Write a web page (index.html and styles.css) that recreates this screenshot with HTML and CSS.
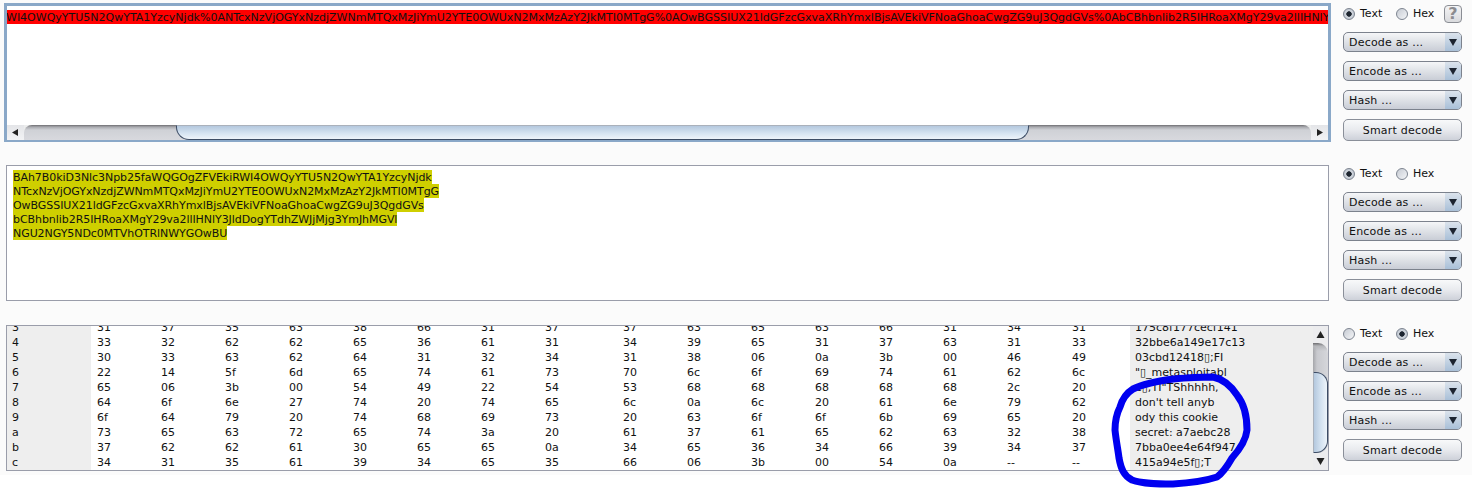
FILE: index.html
```html
<!DOCTYPE html>
<html lang="en">
<head>
<meta charset="utf-8">
<title>Decoder</title>
<link rel="stylesheet" href="styles.css">
</head>
<body>
<main class="app">
  <section class="row">
    <div class="editor editor-focus">
      <div class="line-view">
        <div class="red-line">WI4OWQyYTU5N2QwYTA1YzcyNjdk%0ANTcxNzVjOGYxNzdjZWNmMTQxMzJiYmU2YTE0OWUxN2MxMzAzY2JkMTI0MTgG%0AOwBGSSIUX21ldGFzcGxvaXRhYmxlBjsAVEkiVFNoaGhoaCwgZG9uJ3QgdGVs%0AbCBhbnlib2R5IHRoaXMgY29va2llIHNlY3JldDogYTdhZWJjMjg3YmJhMGVl%0ANGU2NGY5NDc0MTVhOTRlNWYGOwBU</div>
      </div>
      <div class="hscroll">
        <span class="arrow-btn"><svg width="9" height="9" viewBox="0 0 9 9"><path d="M7 1v7L1 4.500z" fill="#222"/></svg></span>
        <div class="htrack">
          <div class="hspace-left"></div>
          <div class="hthumb"></div>
          <div class="hspace-right"></div>
        </div>
        <span class="arrow-btn"><svg width="9" height="9" viewBox="0 0 9 9"><path d="M2 1v7l6-3.500z" fill="#222"/></svg></span>
      </div>
    </div>
    <aside class="side">
      <div class="radios">
        <span class="radio radio-on"></span><span class="radio-label label-text">Text</span>
        <span class="radio"></span><span class="radio-label">Hex</span>
        <span class="help">?</span>
      </div>
      <div class="combo"><span class="combo-text">Decode as ...</span><span class="combo-arrow"><svg width="8" height="8" viewBox="0 0 8 8"><path d="M0 1h8L4 8z" fill="#1c2430"/></svg></span></div>
      <div class="combo"><span class="combo-text">Encode as ...</span><span class="combo-arrow"><svg width="8" height="8" viewBox="0 0 8 8"><path d="M0 1h8L4 8z" fill="#1c2430"/></svg></span></div>
      <div class="combo"><span class="combo-text">Hash ...</span><span class="combo-arrow"><svg width="8" height="8" viewBox="0 0 8 8"><path d="M0 1h8L4 8z" fill="#1c2430"/></svg></span></div>
      <div class="smart">Smart decode</div>
    </aside>
  </section>

  <section class="row">
    <div class="editor editor-text">
      <div class="yellow-block">
        <span class="yellow-line">BAh7B0kiD3Nlc3Npb25faWQGOgZFVEkiRWI4OWQyYTU5N2QwYTA1YzcyNjdk</span>
        <span class="yellow-line">NTcxNzVjOGYxNzdjZWNmMTQxMzJiYmU2YTE0OWUxN2MxMzAzY2JkMTI0MTgG</span>
        <span class="yellow-line">OwBGSSIUX21ldGFzcGxvaXRhYmxlBjsAVEkiVFNoaGhoaCwgZG9uJ3QgdGVs</span>
        <span class="yellow-line">bCBhbnlib2R5IHRoaXMgY29va2llIHNlY3JldDogYTdhZWJjMjg3YmJhMGVl</span>
        <span class="yellow-line">NGU2NGY5NDc0MTVhOTRlNWYGOwBU</span>
      </div>
    </div>
    <aside class="side">
      <div class="radios">
        <span class="radio radio-on"></span><span class="radio-label label-text">Text</span>
        <span class="radio"></span><span class="radio-label">Hex</span>
      </div>
      <div class="combo"><span class="combo-text">Decode as ...</span><span class="combo-arrow"><svg width="8" height="8" viewBox="0 0 8 8"><path d="M0 1h8L4 8z" fill="#1c2430"/></svg></span></div>
      <div class="combo"><span class="combo-text">Encode as ...</span><span class="combo-arrow"><svg width="8" height="8" viewBox="0 0 8 8"><path d="M0 1h8L4 8z" fill="#1c2430"/></svg></span></div>
      <div class="combo"><span class="combo-text">Hash ...</span><span class="combo-arrow"><svg width="8" height="8" viewBox="0 0 8 8"><path d="M0 1h8L4 8z" fill="#1c2430"/></svg></span></div>
      <div class="smart">Smart decode</div>
    </aside>
  </section>

  <section class="row">
    <div class="editor editor-hex">
      <div class="hex-view">
        <div class="hex-table">
          <div class="hex-row"><span>3</span><span>31</span><span>37</span><span>35</span><span>63</span><span>38</span><span>66</span><span>31</span><span>37</span><span>37</span><span>63</span><span>65</span><span>63</span><span>66</span><span>31</span><span>34</span><span>31</span><span>175c8f177cecf141</span></div>
          <div class="hex-row"><span>4</span><span>33</span><span>32</span><span>62</span><span>62</span><span>65</span><span>36</span><span>61</span><span>31</span><span>34</span><span>39</span><span>65</span><span>31</span><span>37</span><span>63</span><span>31</span><span>33</span><span>32bbe6a149e17c13</span></div>
          <div class="hex-row"><span>5</span><span>30</span><span>33</span><span>63</span><span>62</span><span>64</span><span>31</span><span>32</span><span>34</span><span>31</span><span>38</span><span>06</span><span>0a</span><span>3b</span><span>00</span><span>46</span><span>49</span><span>03cbd12418▯;FI</span></div>
          <div class="hex-row"><span>6</span><span>22</span><span>14</span><span>5f</span><span>6d</span><span>65</span><span>74</span><span>61</span><span>73</span><span>70</span><span>6c</span><span>6f</span><span>69</span><span>74</span><span>61</span><span>62</span><span>6c</span><span>"▯_metasploitabl</span></div>
          <div class="hex-row"><span>7</span><span>65</span><span>06</span><span>3b</span><span>00</span><span>54</span><span>49</span><span>22</span><span>54</span><span>53</span><span>68</span><span>68</span><span>68</span><span>68</span><span>68</span><span>2c</span><span>20</span><span>e▯;TI"TShhhhh, </span></div>
          <div class="hex-row"><span>8</span><span>64</span><span>6f</span><span>6e</span><span>27</span><span>74</span><span>20</span><span>74</span><span>65</span><span>6c</span><span>0a</span><span>6c</span><span>20</span><span>61</span><span>6e</span><span>79</span><span>62</span><span>don't tell anyb</span></div>
          <div class="hex-row"><span>9</span><span>6f</span><span>64</span><span>79</span><span>20</span><span>74</span><span>68</span><span>69</span><span>73</span><span>20</span><span>63</span><span>6f</span><span>6f</span><span>6b</span><span>69</span><span>65</span><span>20</span><span>ody this cookie</span></div>
          <div class="hex-row"><span>a</span><span>73</span><span>65</span><span>63</span><span>72</span><span>65</span><span>74</span><span>3a</span><span>20</span><span>61</span><span>37</span><span>61</span><span>65</span><span>62</span><span>63</span><span>32</span><span>38</span><span>secret: a7aebc28</span></div>
          <div class="hex-row"><span>b</span><span>37</span><span>62</span><span>62</span><span>61</span><span>30</span><span>65</span><span>65</span><span>0a</span><span>34</span><span>65</span><span>36</span><span>34</span><span>66</span><span>39</span><span>34</span><span>37</span><span>7bba0ee4e64f947</span></div>
          <div class="hex-row"><span>c</span><span>34</span><span>31</span><span>35</span><span>61</span><span>39</span><span>34</span><span>65</span><span>35</span><span>66</span><span>06</span><span>3b</span><span>00</span><span>54</span><span>0a</span><span>--</span><span>--</span><span>415a94e5f▯;T</span></div>
        </div>
      </div>
      <div class="vscroll">
        <span class="varrow"><svg width="9" height="9" viewBox="0 0 9 9"><path d="M4.500 1l4 7h-8z" fill="#222"/></svg></span>
        <div class="vtrack">
          <div class="vspace-top"></div>
          <div class="vthumb"></div>
          <div class="vspace-bottom"></div>
        </div>
        <span class="varrow"><svg width="9" height="9" viewBox="0 0 9 9"><path d="M.5 1h8l-4 7z" fill="#222"/></svg></span>
      </div>
    </div>
    <aside class="side">
      <div class="radios">
        <span class="radio"></span><span class="radio-label label-text">Text</span>
        <span class="radio radio-on"></span><span class="radio-label">Hex</span>
      </div>
      <div class="combo"><span class="combo-text">Decode as ...</span><span class="combo-arrow"><svg width="8" height="8" viewBox="0 0 8 8"><path d="M0 1h8L4 8z" fill="#1c2430"/></svg></span></div>
      <div class="combo"><span class="combo-text">Encode as ...</span><span class="combo-arrow"><svg width="8" height="8" viewBox="0 0 8 8"><path d="M0 1h8L4 8z" fill="#1c2430"/></svg></span></div>
      <div class="combo"><span class="combo-text">Hash ...</span><span class="combo-arrow"><svg width="8" height="8" viewBox="0 0 8 8"><path d="M0 1h8L4 8z" fill="#1c2430"/></svg></span></div>
      <div class="smart">Smart decode</div>
    </aside>
  </section>

  <svg class="scribble" width="150" height="120" viewBox="1110 372 150 120">
    <path d="M1213 377C1198 377 1184 378 1173 379C1158 381 1143 384 1133 389C1125 394 1122 400 1120 407C1116 415 1115 422 1115 430C1116 440 1118 450 1119 458C1121 469 1124 476 1132 480C1143 484 1158 484 1173 484C1190 483 1205 481 1217 477C1224 472 1228 465 1232 458C1240 449 1246 440 1247 430C1247 418 1245 405 1237 395C1231 386 1223 379 1213 377Z" fill="none" stroke="#0000f0" stroke-width="7" stroke-linejoin="round"/>
  </svg>
</main>
</body>
</html>
```
FILE: styles.css
```css
* { box-sizing: border-box; }
html, body { margin: 0; padding: 0; height: 100%; }
body {
  background: #fff;
  font-family: "DejaVu Sans", sans-serif;
  font-size: 11px;
  color: #111;
  overflow: hidden;
}
.app {
  position: relative;
  height: 475px;
  background: #fbfbfb;
}
.row {
  display: flex;
  height: 160px;
  align-items: flex-start;
}
.row:last-of-type { height: 155px; }
.editor {
  flex: none;
  background: #fff;
  overflow: hidden;
}
.editor-focus {
  display: flex;
  flex-direction: column;
  margin: 3px 0 0 4px;
  width: 1327px;
  height: 139px;
  border: 3px solid #8aa8c8;
  border-bottom-width: 2px;
}
.line-view { flex: 1; padding-top: 4px; overflow: hidden; }
.red-line {
  height: 14px;
  padding-top: 1px;
  line-height: 14px;
  background: #ff0000;
  white-space: nowrap;
  overflow: hidden;
  text-indent: -1px;
}
.hscroll {
  flex: none;
  display: flex;
  height: 15px;
  background: #eceded;
}
.arrow-btn {
  flex: none;
  display: flex;
  align-items: center;
  justify-content: center;
  width: 17px;
  background: linear-gradient(#e4e5e8, #f2f3f5);
}
.htrack {
  flex: 1;
  display: flex;
  border-radius: 8px 8px 0 0;
  background: linear-gradient(#6d6d70 0, #a9aaaf 2px, #cfd1d6 5px, #d8d9de 100%);
}
.hspace-left { flex: none; width: 152px; }
.hthumb {
  flex: none;
  width: 853px;
  border: 1px solid #3d4d66;
  border-top-color: #aab1bb;
  border-radius: 0 0 13px 13px;
  background: linear-gradient(#b4c8de, #d5e3f1 55%, #eef4fa);
}
.hspace-right { flex: 1; }

.editor-text {
  margin: 5px 0 0 6px;
  width: 1323px;
  height: 136px;
  border: 1px solid #9a9daa;
  padding: 4px 0 0 6px;
}
.yellow-block { display: flex; flex-direction: column; align-items: flex-start; }
.yellow-line {
  height: 14px;
  padding-top: 1px;
  line-height: 14px;
  letter-spacing: -0.06px;
  background: #cfcf00;
  white-space: nowrap;
}

.editor-hex {
  display: flex;
  margin: 5px 0 0 6px;
  width: 1323px;
  height: 146px;
  border: 1px solid #9a9daa;
}
.hex-view {
  flex: 1;
  overflow: hidden;
  background: linear-gradient(90deg, #eeeeee 84px, #fff 84px, #fff 1123px, #eeeeee 1123px);
}
.hex-table { margin-top: -6px; }
.hex-row {
  display: grid;
  grid-template-columns: 84px repeat(7, 64px) 78px repeat(6, 64px) 65px 64px 1fr;
  height: 15px;
  line-height: 15px;
  white-space: pre;
}
.hex-row span { padding-left: 6px; }
.hex-row span:first-child,
.hex-row span:last-child { padding-left: 5px; }
.vscroll {
  flex: none;
  display: flex;
  flex-direction: column;
  width: 15px;
  background: #ececee;
}
.varrow {
  flex: none;
  display: flex;
  align-items: center;
  justify-content: center;
  height: 17px;
  background: #ececee;
}
.vtrack {
  flex: 1;
  display: flex;
  flex-direction: column;
  border-radius: 0 10px 10px 0;
  background:
    linear-gradient(#6d6d70, #b5b6ba 3px, transparent 8px),
    linear-gradient(90deg, #a5a6aa 0, #c8c9ce 4px, #d6d7db 100%);
}
.vspace-top { flex: none; height: 29px; }
.vthumb {
  flex: none;
  height: 81px;
  border: 1px solid #3d4d66;
  border-left-color: #aab1bb;
  border-radius: 0 12px 12px 0;
  background: linear-gradient(90deg, #b4c8de, #d5e3f1 55%, #eef4fa);
}
.vspace-bottom { flex: 1; }

.side {
  flex: none;
  display: flex;
  flex-direction: column;
  gap: 9px;
  width: 119px;
  margin-left: auto;
  margin-right: 10px;
}
.radios {
  display: flex;
  align-items: center;
  height: 23px;
  margin-top: 2px;
  margin-bottom: -2px;
  white-space: nowrap;
}
.radio {
  flex: none;
  width: 12px;
  height: 12px;
  border: 1px solid #7d8490;
  border-radius: 50%;
  background: linear-gradient(135deg, #c6cbd3, #f4f5f7);
}
.radio-on {
  background: radial-gradient(circle, #1d2530 0, #1d2530 2.4px, #d2d7de 3px, #aeb9c6 100%);
}
.radio-label { margin-left: 5px; }
.label-text { width: 36px; flex: none; }
.help {
  margin-left: auto;
  width: 18px;
  height: 18px;
  border: 1px solid #8a8d94;
  border-radius: 4px;
  background: linear-gradient(#f4f4f5, #d9dadd);
  color: #8c8c90;
  font-size: 16px;
  font-weight: bold;
  line-height: 16px;
  text-align: center;
}
.combo {
  display: flex;
  height: 20px;
  border: 1px solid #7c828d;
  border-radius: 5px;
  overflow: hidden;
  background: linear-gradient(#f5f6f8, #e3e6ea 40%, #c9cdd6);
}
.combo-text {
  flex: 1;
  padding-left: 5px;
  line-height: 20px;
  letter-spacing: 0.2px;
}
.combo-arrow {
  flex: none;
  display: flex;
  align-items: center;
  justify-content: center;
  width: 16px;
  background: linear-gradient(#dbe3ec, #a9c0d8);
}
.smart {
  height: 22px;
  border: 1px solid #8a8f99;
  border-radius: 5px;
  background: linear-gradient(#f8f9fa, #e8eaee 50%, #cdd1d9);
  line-height: 22px;
  text-align: center;
  letter-spacing: 0.2px;
}
.scribble {
  position: absolute;
  left: 1110px;
  top: 372px;
  pointer-events: none;
}
```
